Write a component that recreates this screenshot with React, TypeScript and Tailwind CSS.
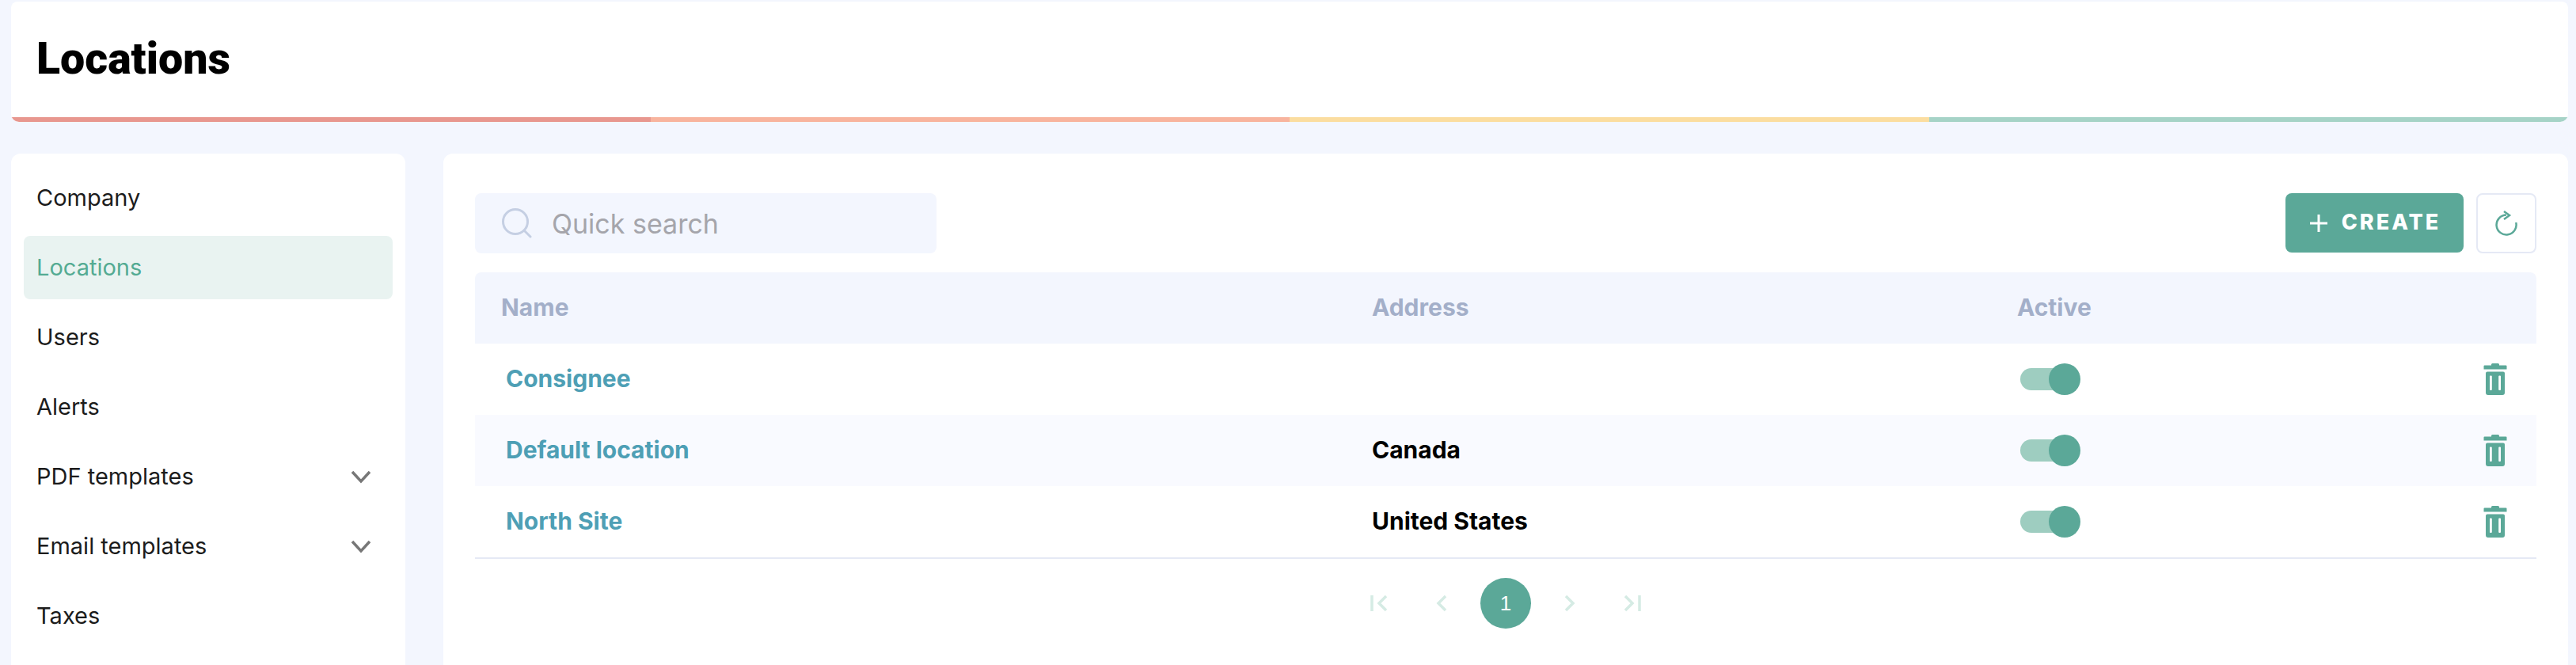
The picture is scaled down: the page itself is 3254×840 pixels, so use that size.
const sideItems = [
  { label: "Company" },
  { label: "Locations", active: true },
  { label: "Users" },
  { label: "Alerts" },
  { label: "PDF templates", expandable: true },
  { label: "Email templates", expandable: true },
  { label: "Taxes" },
]

const rows = [
  { name: "Consignee", address: "" },
  { name: "Default location", address: "Canada" },
  { name: "North Site", address: "United States" },
]

function TrashIcon() {
  return (
    <svg width="30" height="40" viewBox="0 0 30 40" fill="#5ba898">
      <path d="M11.5 0h7a1.5 1.5 0 0 1 1.5 1.500V2.500h8.500a1 1 0 0 1 1 1V7.500H0.500V3.500a1 1 0 0 1 1-1H10V1.500A1.500 1.500 0 0 1 11.500 0z" />
      <path
        fillRule="evenodd"
        d="M5 10.500h20a2 2 0 0 1 2 2V37a3 3 0 0 1-3 3H6a3 3 0 0 1-3-3V12.500a2 2 0 0 1 2-2zM9 15.500a1 1 0 0 0-1 1V33a1 1 0 0 0 1 1h.8a1 1 0 0 0 1-1V16.500a1 1 0 0 0-1-1zM20.200 15.500a1 1 0 0 0-1 1V33a1 1 0 0 0 1 1h.8a1 1 0 0 0 1-1V16.500a1 1 0 0 0-1-1z"
      />
    </svg>
  )
}

function PageIcon({ kind }: { kind: "first" | "prev" | "next" | "last" }) {
  const paths = {
    first: "M2 1v20M20 2l-9 9 9 9",
    prev: "M15 2l-9 9 9 9",
    next: "M7 2l9 9-9 9",
    last: "M20 1v20M2 2l9 9-9 9",
  }
  return (
    <svg width="22" height="22" viewBox="0 0 22 22" fill="none" stroke="#d5ebe4" strokeWidth="3.500">
      <path d={paths[kind]} />
    </svg>
  )
}

function PageButton({ kind }: { kind: "first" | "prev" | "next" | "last" }) {
  return (
    <button type="button" className="flex h-16 w-16 items-center justify-center">
      <PageIcon kind={kind} />
    </button>
  )
}

export default function App() {
  return (
    <div className="h-[840px] overflow-hidden bg-[#f3f6fe] pl-[14px] pr-[10px] pt-[2px] font-['Inter',sans-serif] text-[29px]">
      <header className="overflow-hidden rounded-t-lg rounded-b-[10px] bg-white">
        <div className="flex h-[146px] items-center pl-[32px]">
          <h1 className="font-['Roboto',sans-serif] text-[55.5px] font-black leading-none text-black">Locations</h1>
        </div>
        <div className="grid h-[6px] grid-cols-4">
          <div className="bg-[#e8978f]" />
          <div className="bg-[#f8b49e]" />
          <div className="bg-[#fbdda0]" />
          <div className="bg-[#a6d3c7]" />
        </div>
      </header>

      <div className="mt-[40px] flex gap-[48px]">
        <aside className="h-[700px] w-[498px] shrink-0 rounded-xl bg-white px-4 pt-[16px]">
          <nav className="flex flex-col gap-2">
            {sideItems.map((item) => (
              <a
                key={item.label}
                href="#"
                className={
                  item.active
                    ? "flex h-[80px] items-center rounded-lg bg-[#e9f3f1] pl-4 text-[#54ab93]"
                    : "flex h-[80px] items-center justify-between pl-4 pr-[27px] text-[#1c1c1c]"
                }
              >
                {item.label}
                {item.expandable && (
                  <svg width="26" height="17" viewBox="0 0 26 17" fill="none" stroke="#777777" strokeWidth="3.500">
                    <path d="M2 2l11 12 11-12" />
                  </svg>
                )}
              </a>
            ))}
          </nav>
        </aside>

        <main className="h-[700px] flex-1 rounded-xl bg-white px-10 pt-[50px]">
          <div className="flex h-[76px] items-center justify-between">
            <div className="flex h-[76px] w-[583px] items-center gap-[25px] rounded-lg bg-[#f3f6fe] pl-[34px]">
              <svg width="38" height="38" viewBox="0 0 38 38" fill="none" stroke="#c5cfe3" strokeWidth="3">
                <circle cx="17" cy="17" r="15.500" />
                <path d="M28 28l8 8" strokeLinecap="round" />
              </svg>
              <input
                placeholder="Quick search"
                className="w-[400px] bg-transparent text-[34px] outline-none placeholder:text-[#a5a5ab]"
              />
            </div>
            <div className="flex gap-4">
              <button
                type="button"
                className="flex h-[75px] w-[225px] items-center justify-center gap-[18px] rounded-lg bg-[#5ba898] text-[27px] font-extrabold tracking-[3px] text-white"
              >
                <svg width="22" height="22" viewBox="0 0 22 22" stroke="white" strokeWidth="3" className="ml-[2px]">
                  <path d="M11 0v22M0 11h22" />
                </svg>
                CREATE
              </button>
              <button
                type="button"
                className="flex h-[76px] w-[76px] items-center justify-center rounded-lg border-2 border-[#e5e9f5] bg-white"
              >
                <svg width="30" height="32" viewBox="0 0 30 32" fill="none" stroke="#5ba898" strokeWidth="2.500">
                  <path d="M15 5.500A12.500 12.500 0 1 0 27.200 15" />
                  <path d="M12 1l7 5-7 5" />
                </svg>
              </button>
            </div>
          </div>

          <div className="mt-6">
            <div className="grid h-[90px] grid-cols-[1133px_815px_1fr] items-center rounded-t-lg bg-[#f3f6fe] pb-[2px] text-[30px] font-bold text-[#a3afc9]">
              <div className="pl-[33px]">Name</div>
              <div>Address</div>
              <div>Active</div>
            </div>
            {rows.map((row, i) => (
              <div
                key={row.name}
                className={
                  i === 1
                    ? "grid h-[90px] grid-cols-[1133px_815px_1fr] items-center bg-[#f9faff] text-[30px] font-bold"
                    : "grid h-[90px] grid-cols-[1133px_815px_1fr] items-center text-[30px] font-bold"
                }
              >
                <div className="pb-[2px] pl-[39px] text-[#4e9fb5]">{row.name}</div>
                <div className="pb-[2px] text-black">{row.address}</div>
                <div className="flex items-center justify-between pl-[4px] pr-[37px]">
                  <div className="flex h-[28px] w-[68px] items-center justify-end rounded-full bg-[#9ecdc0]">
                    <div className="-mr-2 h-10 w-10 rounded-full bg-[#5ba898]" />
                  </div>
                  <TrashIcon />
                </div>
              </div>
            ))}
            <div className="h-[2px] bg-[#e5e9f5]" />
          </div>

          <div className="mt-[24px] flex items-center justify-center gap-4">
            <PageButton kind="first" />
            <PageButton kind="prev" />
            <div className="flex h-16 w-16 items-center justify-center rounded-full bg-[#5ba898] font-['Liberation_Sans',sans-serif] text-[26px] text-white">
              1
            </div>
            <PageButton kind="next" />
            <PageButton kind="last" />
          </div>
        </main>
      </div>
    </div>
  )
}
